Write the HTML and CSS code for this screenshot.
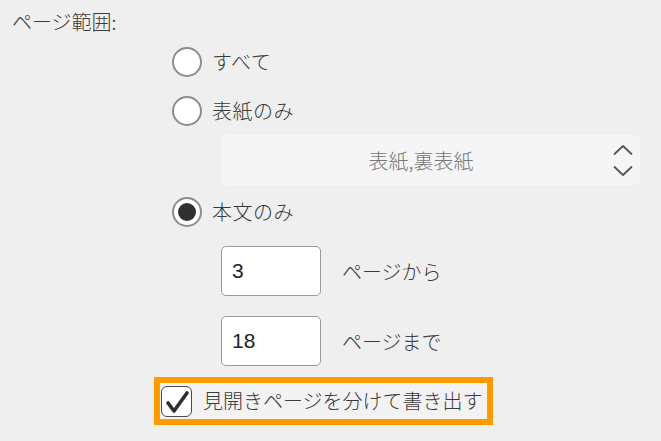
FILE: index.html
```html
<!DOCTYPE html>
<html lang="ja">
<head>
<meta charset="utf-8">
<link rel="stylesheet" href="styles.css">
</head>
<body>
<div class="page">
  <div class="title">ページ範囲:</div>
  <div class="options">
    <div class="radio-row row1"><span class="radio"></span><span class="label">すべて</span></div>
    <div class="radio-row row2"><span class="radio"></span><span class="label">表紙のみ</span></div>
    <div class="indent">
      <div class="select">
        <span class="select-text">表紙,裏表紙</span>
        <svg class="arrows" width="20" height="34" viewBox="0 0 20 34">
          <polyline points="1.5,10 10,2 18.5,10" fill="none" stroke="#555" stroke-width="1.8" stroke-linecap="round" stroke-linejoin="round"/>
          <polyline points="1.5,23 10,31 18.5,23" fill="none" stroke="#555" stroke-width="1.8" stroke-linecap="round" stroke-linejoin="round"/>
        </svg>
      </div>
    </div>
    <div class="radio-row row3"><span class="radio checked"></span><span class="label">本文のみ</span></div>
    <div class="indent">
      <div class="page-row first"><div class="num">3</div><span class="suffix">ページから</span></div>
      <div class="page-row second"><div class="num">18</div><span class="suffix">ページまで</span></div>
    </div>
  </div>
  <div class="check-wrap">
    <div class="check-box">
      <span class="checkbox">
        <svg width="29" height="29" viewBox="0 0 29 29">
          <polyline points="6,16 12,24 25,6" fill="none" stroke="#2e2e2e" stroke-width="3.6" stroke-linecap="round" stroke-linejoin="round"/>
        </svg>
      </span>
      <span class="check-label">見開きページを分けて書き出す</span>
    </div>
  </div>
</div>
</body>
</html>
```
FILE: styles.css
```css
html, body {
  margin: 0;
  padding: 0;
}
body {
  background: #efefef;
  font-family: "Liberation Sans", "Noto Sans CJK JP", sans-serif;
  color: #3a3a3a;
  font-size: 20px;
  width: 661px;
  height: 441px;
  overflow: hidden;
}
.page {
  display: flex;
  flex-direction: column;
}
.jp,
.title,
.radio-row,
.select-text,
.suffix,
.check-label {
  font-family: "Noto Sans CJK JP", sans-serif;
  font-weight: 300;
}
.title {
  padding: 10px 0 0 12px;
  height: 27px;
  line-height: 24px;
}
.options {
  display: flex;
  flex-direction: column;
  padding-left: 172px;
}
.radio-row {
  display: flex;
  align-items: center;
  height: 50px;
}
.row2 { height: 48px; }
.row3 { margin-top: 2px; }
.radio {
  width: 26px;
  height: 26px;
  border: 2px solid #8d8d8d;
  border-radius: 50%;
  background: #fff;
  position: relative;
  flex: none;
}
.radio.checked::after {
  content: "";
  position: absolute;
  left: 4px;
  top: 4px;
  width: 18px;
  height: 18px;
  border-radius: 50%;
  background: #2f2f2f;
}
.label {
  margin-left: 10px;
  line-height: 24px;
  letter-spacing: 0.5px;
}
.indent {
  padding-left: 49px;
  display: flex;
  flex-direction: column;
}
.select {
  width: 419px;
  height: 50px;
  background: #f5f5f5;
  border-radius: 6px;
  display: flex;
  align-items: center;
  box-sizing: border-box;
  padding-right: 7px;
}
.select-text {
  flex: 1;
  text-align: center;
  color: #777;
  padding-left: 8px;
}
.arrows {
  flex: none;
  margin-top: 1px;
}
.page-row {
  display: flex;
  align-items: center;
}
.page-row.first { margin-top: 9px; }
.page-row.second { margin-top: 20px; }
.num {
  width: 100px;
  height: 50px;
  box-sizing: border-box;
  border: 1px solid #9a9a9a;
  border-radius: 5px;
  background: #fff;
  padding-left: 10px;
  display: flex;
  align-items: center;
  font-size: 21px;
  color: #222;
  font-family: "Liberation Sans", sans-serif;
}
.suffix {
  margin-left: 21px;
}
.check-wrap {
  padding-left: 154px;
  margin-top: 11px;
  display: flex;
}
.check-box {
  border: 6px solid #ff9a00;
  width: 327px;
  height: 36px;
  display: flex;
  align-items: center;
  background: #f2f2f2;
}
.checkbox {
  width: 31px;
  height: 31px;
  box-sizing: border-box;
  border: 1.5px solid #4a4a4a;
  border-radius: 6px;
  background: #fff;
  margin-left: 1px;
  display: flex;
  align-items: center;
  justify-content: center;
  flex: none;
}
.check-label {
  margin-left: 11px;
  white-space: nowrap;
  line-height: 24px;
}
```
